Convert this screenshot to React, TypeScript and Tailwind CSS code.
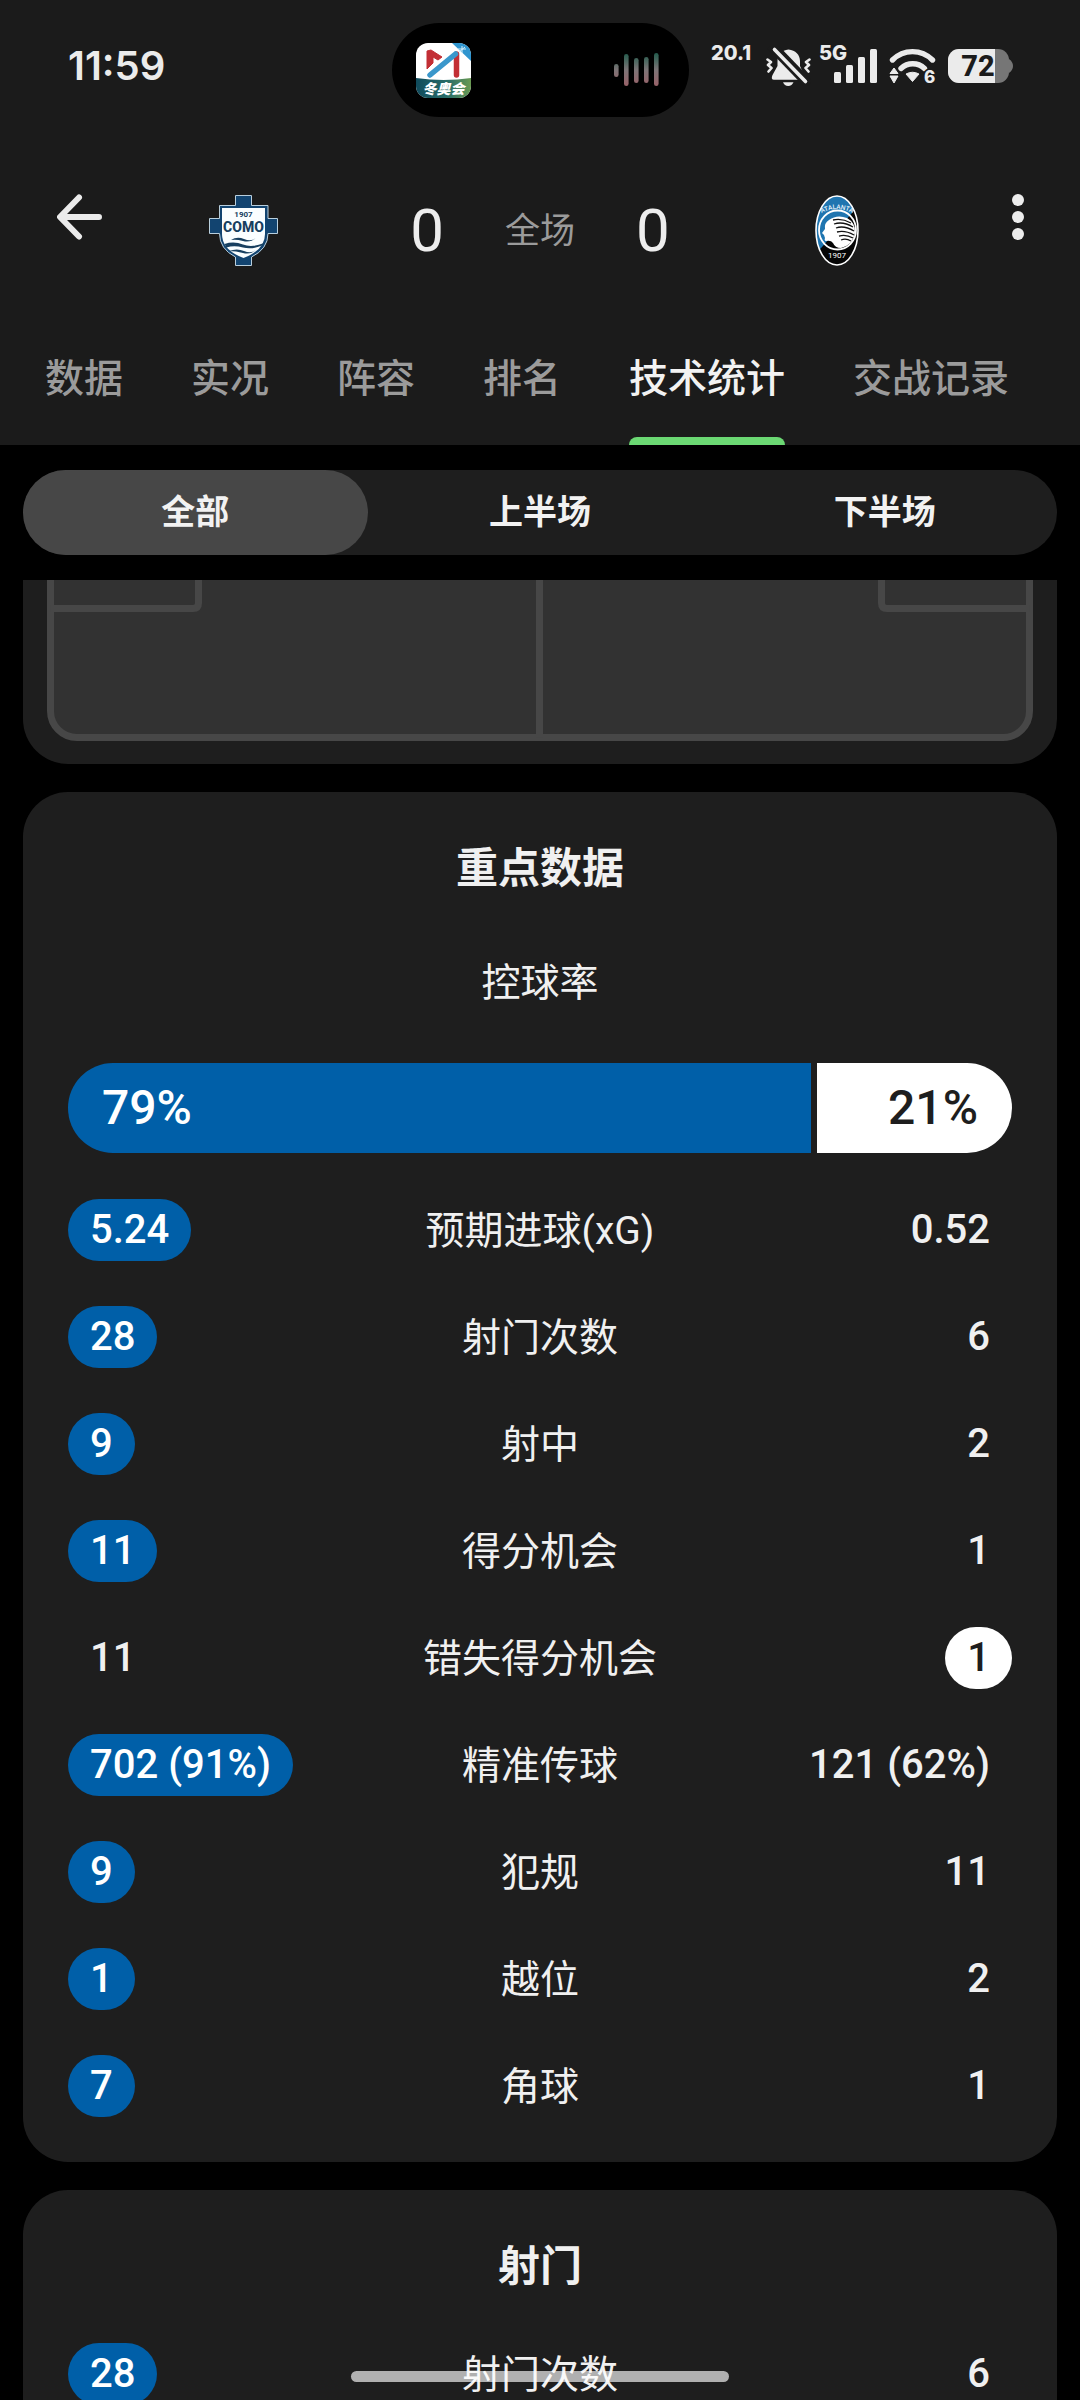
import { useState } from "react"

type Side = "home" | "away"

type Stat = {
  label: string
  home: string
  away: string
  lead: Side
}

const tabs = ["数据", "实况", "阵容", "排名", "技术统计", "交战记录"]

const periods = ["全部", "上半场", "下半场"]

const keyStats: Stat[] = [
  { label: "预期进球(xG)", home: "5.24", away: "0.52", lead: "home" },
  { label: "射门次数", home: "28", away: "6", lead: "home" },
  { label: "射中", home: "9", away: "2", lead: "home" },
  { label: "得分机会", home: "11", away: "1", lead: "home" },
  { label: "错失得分机会", home: "11", away: "1", lead: "away" },
  { label: "精准传球", home: "702 (91%)", away: "121 (62%)", lead: "home" },
  { label: "犯规", home: "9", away: "11", lead: "home" },
  { label: "越位", home: "1", away: "2", lead: "home" },
  { label: "角球", home: "7", away: "1", lead: "home" },
]

const shotStats: Stat[] = [{ label: "射门次数", home: "28", away: "6", lead: "home" }]

function AppBadge() {
  return (
    <svg viewBox="0 0 55 55" className="h-[55px] w-[55px]" aria-hidden="true">
      <defs>
        <clipPath id="badge-clip">
          <rect width="55" height="55" rx="12" />
        </clipPath>
        <linearGradient id="badge-band" x1="0" x2="1" y1="0" y2="0">
          <stop offset="0" stopColor="#0f4a5c" />
          <stop offset="0.6" stopColor="#2a6f68" />
          <stop offset="1" stopColor="#6a9a52" />
        </linearGradient>
      </defs>
      <g clipPath="url(#badge-clip)">
        <rect width="55" height="55" fill="#fff" />
        <path d="M36 0H55V18Z" fill="#2f95cf" />
        <path d="M42 6h8M46 3v7M43 9l6-5" stroke="#d8f0fb" strokeWidth="1" />
        <path d="M0 35Q28 39 55 35V55H0Z" fill="url(#badge-band)" />
        <path d="M11 8L15 7L26 14L22 17L17 14V20L11 26Z" fill="#c22f35" stroke="#c22f35" strokeLinejoin="round" />
        <path d="M40.500 11V32" stroke="#c22f35" strokeWidth="5.500" strokeLinecap="round" />
        <path d="M14 32L39.500 11" stroke="#3a97cb" strokeWidth="5.500" strokeLinecap="round" />
        <text x="27.500" y="51" textAnchor="middle" fontSize="14" fontWeight="900" fontStyle="italic" fill="#fff" className="font-['Noto_Sans_CJK_SC',sans-serif]">
          冬奥会
        </text>
      </g>
    </svg>
  )
}

function Waveform() {
  const bars = [
    [2, 12, 25],
    [12, 2, 34],
    [22, 6, 31],
    [32, 5, 31],
    [42, 1, 34],
  ]
  return (
    <svg viewBox="0 0 45 36" className="h-9 w-[45px]" aria-hidden="true">
      <defs>
        <linearGradient id="wave" gradientUnits="userSpaceOnUse" x1="0" x2="0" y1="0" y2="36">
          <stop offset="0" stopColor="#1d5a4a" />
          <stop offset="0.5" stopColor="#7d7476" />
          <stop offset="1" stopColor="#9c5f66" />
        </linearGradient>
      </defs>
      {bars.map(([x, y1, y2]) => (
        <rect key={x} x={x - 2} y={y1} width="4.600" height={y2 - y1} rx="2.300" fill="url(#wave)" />
      ))}
    </svg>
  )
}

function MutedBell() {
  return (
    <svg viewBox="0 0 45 40" className="h-10 w-[45px]" aria-hidden="true">
      <path
        d="M22.500 3.500C15.500 4 11.500 9 11.500 15V20L6.500 29Q4.500 33.700 8 33.700H37Q40 33.700 38.500 30L34 20V15C34 9 29.500 4 22.500 3.500Z"
        fill="#ebebeb"
      />
      <path d="M17 36.300H27.500Q26 40 22.200 40T17 36.300Z" fill="#ebebeb" />
      <path d="M5 -1L43 38.500" stroke="#1b1b1b" strokeWidth="10" />
      <path d="M8.500 3.500L39.500 35.500" stroke="#ebebeb" strokeWidth="3.600" strokeLinecap="round" />
      <path
        d="M1.500 13.500L5 16L2 19L5.500 22L2.500 25.500M43.500 13.500L40 16L43 19L39.500 22L42.500 25.500"
        fill="none"
        stroke="#ebebeb"
        strokeWidth="2.600"
        strokeLinejoin="round"
        strokeLinecap="round"
      />
    </svg>
  )
}

function Wifi() {
  return (
    <svg viewBox="0 -6 48 48" className="h-12 w-12" aria-hidden="true">
      <path d="M3.500 12A28 28 0 0 1 43.500 12" fill="none" stroke="#ebebeb" strokeWidth="5.400" strokeLinecap="round" />
      <path d="M12 20.500A17 17 0 0 1 35.500 20.500" fill="none" stroke="#ebebeb" strokeWidth="5.400" strokeLinecap="round" />
      <path d="M17 26Q23.500 22.500 30 26L23.500 33.500Z" fill="#ebebeb" stroke="#ebebeb" strokeLinejoin="round" />
      <path d="M5 20L9 25.500H1ZM5 35L1 28H9Z" fill="#ebebeb" stroke="#ebebeb" strokeLinejoin="round" />
      <text x="35" y="35" fontSize="17" fontWeight="800" fill="#ebebeb" stroke="#1b1b1b" strokeWidth="3" paintOrder="stroke">
        6
      </text>
    </svg>
  )
}

function Battery() {
  return (
    <svg viewBox="0 0 65 34" className="h-[34px] w-[65px]" aria-hidden="true">
      <defs>
        <clipPath id="battery-clip">
          <rect width="61" height="34" rx="11" />
        </clipPath>
      </defs>
      <g clipPath="url(#battery-clip)">
        <rect width="61" height="34" fill="#767676" />
        <rect width="47" height="34" fill="#ebebeb" />
      </g>
      <path d="M61 10Q65 13 65 17T61 24Z" fill="#767676" />
      <text x="30" y="27" textAnchor="middle" fontSize="29" fontWeight="800" fill="#1b1b1b" className="font-['Roboto',sans-serif]">
        72
      </text>
    </svg>
  )
}

function StatusBar() {
  return (
    <div className="grid grid-cols-[1fr_297px_1fr] items-start pt-[23px] font-['Inter',sans-serif] text-[#ebebeb]">
      <div className="flex h-[85px] items-center pl-[68px] text-[40px] font-semibold">11:59</div>
      <div className="flex h-[94px] items-center justify-between rounded-full bg-black pl-6 pr-[30px]">
        <AppBadge />
        <Waveform />
      </div>
      <div className="flex h-[85px] items-center justify-end pr-[67px]">
        <span className="mr-[15px] h-[42px] text-[20px] font-extrabold leading-[16px]">20.1</span>
        <MutedBell />
        <div className="ml-2 mr-[11px] grid w-[59px]">
          <span className="text-[20px] font-extrabold leading-[16px] [grid-area:1/1]">5G</span>
          <svg viewBox="0 0 44 42" className="h-[42px] w-[44px] justify-self-end [grid-area:1/1]" fill="#ebebeb" aria-hidden="true">
            <rect x="0" y="27" width="7" height="11" rx="1.500" />
            <rect x="12" y="20" width="7" height="18" rx="1.500" />
            <rect x="24" y="12" width="7" height="26" rx="1.500" />
            <rect x="36" y="4" width="7" height="34" rx="1.500" />
          </svg>
        </div>
        <Wifi />
        <span className="ml-[11px]">
          <Battery />
        </span>
      </div>
    </div>
  )
}

function ComoCrest() {
  return (
    <svg viewBox="0 0 69 71" className="h-[71px] w-[69px]" role="img" aria-label="Como">
      <path
        d="M26.500 .5H42.500V10.500H59V23.500H68.500V38.500H59Q59 54 42.500 62V70.500H26.500V62Q10.500 54 10.500 38.500H.5V23.500H10.500V10.500H26.500Z"
        fill="#124470"
        stroke="#b9cfdd"
      />
      <path d="M13 13H56V39Q56 55 34.500 63Q13 55 13 39Z" fill="#fafeff" />
      <text x="34.500" y="22" textAnchor="middle" fontSize="8" fontWeight="700" fill="#173f5f">
        1907
      </text>
      <text x="34.500" y="37" textAnchor="middle" fontSize="14" fontWeight="800" fill="#173f5f">
        COMO
      </text>
      <path d="M22 45Q28 41 35 44T47 43Q41 48 34 46T22 45Z" fill="#173f5f" />
      <path d="M15.500 49Q25 46 34 49.500T55 48L54 50Q43 55 34 52.500T17.500 52.500Z" fill="#173f5f" />
      <path d="M20 56Q28 53 35 56T47 55Q41 60 34 58T20 56Z" fill="#173f5f" />
    </svg>
  )
}

function AtalantaCrest() {
  return (
    <svg viewBox="0 0 44 71" className="h-[71px] w-[44px]" role="img" aria-label="Atalanta">
      <defs>
        <clipPath id="atalanta-clip">
          <ellipse cx="22" cy="35.500" rx="21" ry="34.500" />
        </clipPath>
        <path id="atalanta-arc" d="M5 19Q22 9 39 19" />
      </defs>
      <g clipPath="url(#atalanta-clip)">
        <rect width="44" height="71" fill="#1f75b0" />
        <path d="M44 10L0 60V71H44Z" fill="#050505" />
      </g>
      <ellipse cx="22" cy="35.500" rx="21" ry="34.500" fill="none" stroke="#fff" strokeWidth="1.600" />
      <ellipse cx="22.500" cy="35" rx="18.500" ry="19.500" fill="none" stroke="#fff" strokeWidth="1.800" />
      <path
        d="M14 25Q22 19 32 23Q41 28 40 38Q38 50 26 53Q20 53 18 48Q16 45 11 46Q9 46 10 43L9 40L7 38L10 34Q9 28 14 25Z"
        fill="#fff"
      />
      <path
        d="M18 25Q27 23 36 28M19 29Q28 26 38 32M21 33Q29 30 39 36M22 37Q30 35 39 40M24 41Q31 39 38 43M26 45Q31 43 36 46"
        fill="none"
        stroke="#111"
        strokeWidth="1.300"
      />
      <text fontSize="6.500" fontWeight="500" fill="#e4f3fc">
        <textPath href="#atalanta-arc" startOffset="50%" textAnchor="middle">
          ATALANTA
        </textPath>
      </text>
      <text x="22" y="63" textAnchor="middle" fontSize="8" fill="#fff">
        1907
      </text>
    </svg>
  )
}

function MatchHeader() {
  return (
    <div className="mt-[50px] grid grid-cols-[132px_223px_1fr_223px_132px] items-start">
      <button type="button" aria-label="返回" className="flex h-[100px] items-center pl-[57px]">
        <svg viewBox="0 0 45 46" className="h-[46px] w-[45px]" fill="none" stroke="#ebebeb" strokeWidth="6" strokeLinecap="round" strokeLinejoin="round">
          <path d="M42 23H4M22 3.500L3 23L22 42.500" />
        </svg>
      </button>
      <div className="flex h-[127px] items-center justify-center">
        <ComoCrest />
      </div>
      <div className="flex h-[127px] items-center justify-center gap-[61px] text-[60px] text-[#ededed]">
        <span>0</span>
        <span className="pt-[3px] text-[35px] text-[#9b9b9b]">全场</span>
        <span>0</span>
      </div>
      <div className="flex h-[127px] items-center justify-center">
        <AtalantaCrest />
      </div>
      <button type="button" aria-label="更多" className="flex h-[100px] items-center justify-end pr-[56px]">
        <svg viewBox="0 0 12 46" className="h-[46px] w-3" fill="#ededed">
          <circle cx="6" cy="6" r="6" />
          <circle cx="6" cy="23" r="6" />
          <circle cx="6" cy="40" r="6" />
        </svg>
      </button>
    </div>
  )
}

function Tabs() {
  const [active, setActive] = useState("技术统计")

  return (
    <nav className="flex gap-[68px] px-[45px] pt-[58px]">
      {tabs.map((tab) => (
        <button
          key={tab}
          type="button"
          onClick={() => setActive(tab)}
          className="flex shrink-0 flex-col gap-[31px] text-[39px] font-medium leading-[54px]"
        >
          <span className={tab === active ? "text-[#f2f2f2]" : "text-[#9b9b9b]"}>{tab}</span>
          <span className={tab === active ? "h-2 w-full rounded-t-lg bg-[#6bd873]" : "h-2 w-full"} />
        </button>
      ))}
    </nav>
  )
}

function PeriodSwitch() {
  const [active, setActive] = useState("全部")

  return (
    <div className="mx-[23px] mt-[25px] grid grid-cols-3 rounded-full bg-[#1e1e1e]">
      {periods.map((period) => (
        <button
          key={period}
          type="button"
          aria-pressed={period === active}
          onClick={() => setActive(period)}
          className={`h-[85px] rounded-full text-[34px] font-bold text-[#f2f2f2] ${period === active ? "bg-[#474747]" : ""}`}
        >
          {period}
        </button>
      ))}
    </div>
  )
}

function Pitch() {
  return (
    <section className="rounded-b-[45px] bg-[#1e1e1e] px-6 pb-[23px]">
      <svg viewBox="0 0 986 161" className="block w-full" role="img" aria-label="球场">
        <rect x="3.500" y="-60" width="979" height="217.500" rx="26.500" fill="#323232" stroke="#474747" strokeWidth="7" />
        <path
          d="M492.500 -10V157.500M3.500 28.500H146Q151.500 28.500 151.500 23V-10M982.500 28.500H840Q834.500 28.500 834.500 23V-10"
          fill="none"
          stroke="#474747"
          strokeWidth="7"
        />
      </svg>
    </section>
  )
}

function Possession({ home, away }: { home: number; away: number }) {
  return (
    <div className="mt-[53px] flex h-[90px] text-[48px] font-medium leading-[90px]">
      <div
        className="rounded-l-full border-r-[3px] border-[#1e1e1e] bg-[#005fa8] pl-[34px] text-white"
        style={{ width: `${home}%` }}
      >
        {home}%
      </div>
      <div
        className="rounded-r-full border-l-[3px] border-[#1e1e1e] bg-white pr-[34px] text-right text-[#1e1e1e]"
        style={{ width: `${away}%` }}
      >
        {away}%
      </div>
    </div>
  )
}

function StatTable({ stats }: { stats: Stat[] }) {
  const pill = "inline-block h-[62px] rounded-full px-[22px] align-middle leading-[62px]"

  return (
    <table className="w-full table-fixed text-[40px] text-[#f0f0f0]">
      <tbody>
        {stats.map((stat) => (
          <tr key={stat.label} className="h-[107px]">
            <td className="p-0 text-left font-medium">
              <span className={`${pill} ${stat.lead === "home" ? "bg-[#005fa8] text-white" : ""}`}>{stat.home}</span>
            </td>
            <th scope="row" className="p-0 pt-[3px] text-center text-[39px] font-normal">
              {stat.label}
            </th>
            <td className="p-0 text-right font-medium">
              <span className={`${pill} ${stat.lead === "away" ? "bg-white text-[#1e1e1e]" : ""}`}>{stat.away}</span>
            </td>
          </tr>
        ))}
      </tbody>
    </table>
  )
}

export default function App() {
  return (
    <div className="relative flex h-screen flex-col overflow-hidden bg-black font-['Roboto','Noto_Sans_CJK_SC',sans-serif]">
      <header className="shrink-0 bg-[#1b1b1b]">
        <StatusBar />
        <MatchHeader />
        <Tabs />
      </header>

      <PeriodSwitch />

      <main className="mt-[25px] flex min-h-0 flex-1 flex-col gap-7 overflow-hidden px-[23px]">
        <Pitch />

        <section className="shrink-0 rounded-[45px] bg-[#1e1e1e] px-[45px] pb-[23px] pt-[47px]">
          <h2 className="text-center text-[42px] font-bold leading-[60px] text-[#f0f0f0]">重点数据</h2>
          <h3 className="mt-[57px] text-center text-[39px] leading-[54px] text-[#f0f0f0]">控球率</h3>
          <Possession home={79} away={21} />
          <div className="mt-[23px]">
            <StatTable stats={keyStats} />
          </div>
        </section>

        <section className="shrink-0 rounded-t-[45px] bg-[#1e1e1e] px-[45px] pt-[47px]">
          <h2 className="mb-[23px] text-center text-[42px] font-bold leading-[60px] text-[#f0f0f0]">射门</h2>
          <StatTable stats={shotStats} />
        </section>
      </main>

      <div className="absolute bottom-[18px] left-1/2 h-[11px] w-[378px] -translate-x-1/2 rounded-full bg-white/65" />
    </div>
  )
}
